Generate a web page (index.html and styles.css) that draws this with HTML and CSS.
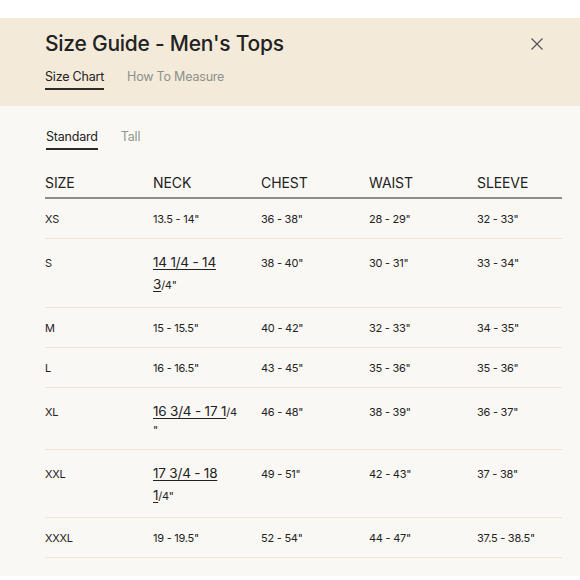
FILE: index.html
```html
<!DOCTYPE html>
<html>
<head>
<meta charset="utf-8">
<link rel="stylesheet" href="styles.css">
</head>
<body>
<div class="modal">
  <header class="head">
    <div class="title-row">
      <h1 class="title">Size Guide - Men's Tops</h1>
      <button class="close" aria-label="Close">
        <svg width="12" height="12" viewBox="0 0 12 12"><path d="M0.5 0.5 L11.5 11.5 M11.5 0.5 L0.5 11.5" stroke="#555" stroke-width="1.2" fill="none"/></svg>
      </button>
    </div>
    <nav class="tabs">
      <span class="tab active">Size Chart</span>
      <span class="tab">How To Measure</span>
    </nav>
  </header>
  <section class="content">
    <nav class="subtabs">
      <span class="subtab active">Standard</span>
      <span class="subtab">Tall</span>
    </nav>
    <div class="table">
      <div class="row hrow">
        <div class="cell">SIZE</div><div class="cell">NECK</div><div class="cell">CHEST</div><div class="cell">WAIST</div><div class="cell">SLEEVE</div>
      </div>
      <div class="row">
        <div class="cell">XS</div><div class="cell">13.5 - 14"</div><div class="cell">36 - 38"</div><div class="cell">28 - 29"</div><div class="cell">32 - 33"</div>
      </div>
      <div class="row tall">
        <div class="cell">S</div><div class="cell"><u class="big">14 1/4 - 14<br>3</u>/4"</div><div class="cell">38 - 40"</div><div class="cell">30 - 31"</div><div class="cell">33 - 34"</div>
      </div>
      <div class="row">
        <div class="cell">M</div><div class="cell">15 - 15.5"</div><div class="cell">40 - 42"</div><div class="cell">32 - 33"</div><div class="cell">34 - 35"</div>
      </div>
      <div class="row">
        <div class="cell">L</div><div class="cell">16 - 16.5"</div><div class="cell">43 - 45"</div><div class="cell">35 - 36"</div><div class="cell">35 - 36"</div>
      </div>
      <div class="row">
        <div class="cell">XL</div><div class="cell"><u class="big">16 3/4 - 17 1</u>/4<br>"</div><div class="cell">46 - 48"</div><div class="cell">38 - 39"</div><div class="cell">36 - 37"</div>
      </div>
      <div class="row">
        <div class="cell">XXL</div><div class="cell"><u class="big">17 3/4 - 18<br>1</u>/4"</div><div class="cell">49 - 51"</div><div class="cell">42 - 43"</div><div class="cell">37 - 38"</div>
      </div>
      <div class="row">
        <div class="cell">XXXL</div><div class="cell">19 - 19.5"</div><div class="cell">52 - 54"</div><div class="cell">44 - 47"</div><div class="cell">37.5 - 38.5"</div>
      </div>
    </div>
  </section>
</div>
</body>
</html>
```

FILE: styles.css
```css
html, body {
  margin: 0;
  padding: 0;
  background: #ffffff;
}
body {
  font-family: Inter, "Liberation Sans", sans-serif;
  color: #222222;
  padding-top: 18px;
}
.modal {
  display: flex;
  flex-direction: column;
}
.head {
  background: #f3eada;
  padding: 12px 37px 16px 45px;
}
.title-row {
  display: flex;
  justify-content: space-between;
  align-items: center;
}
.title {
  margin: 0;
  font-size: 21px;
  line-height: 28px;
  font-weight: 500;
  color: #222;
  letter-spacing: -0.25px;
}
.close {
  background: none;
  border: 0;
  padding: 0;
  width: 12px;
  height: 12px;
  display: flex;
}
.tabs {
  display: flex;
  gap: 23px;
  margin-top: 10px;
}
.tab {
  font-size: 12.5px;
  line-height: 18px;
  color: #8c918b;
  letter-spacing: -0.2px;
  padding-bottom: 2px;
  border-bottom: 2px solid transparent;
}
.tab.active {
  color: #222;
  border-bottom-color: #2a2a2a;
}
.content {
  background: #faf8f4;
  padding: 22px 18px 18px 45px;
}
.subtabs {
  display: flex;
  gap: 23px;
  margin-left: 1px;
}
.subtab {
  font-size: 12.5px;
  line-height: 18px;
  color: #8c988c;
  letter-spacing: -0.2px;
  padding-bottom: 2px;
  border-bottom: 2px solid transparent;
}
.subtab.active {
  color: #222;
  border-bottom-color: #2a2a2a;
}
.table {
  margin-top: 23px;
  display: flex;
  flex-direction: column;
}
.row {
  display: grid;
  grid-template-columns: 108px 108px 108px 108px 1fr;
  align-items: baseline;
  border-bottom: 1px solid #ece4d6;
}
.row.tall .cell {
  padding-bottom: 12px;
}
.cell {
  padding: 12px 4px 11px 0;
  font-size: 11px;
  line-height: 16px;
  letter-spacing: -0.25px;
}
.hrow {
  border-bottom: 2px solid #8c8c8a;
}
.hrow .cell {
  font-size: 14px;
  line-height: 20px;
  letter-spacing: -0.1px;
  padding: 0 0 4px 0;
}
.big {
  font-size: 13.5px;
  line-height: 22px;
  letter-spacing: -0.2px;
  text-underline-offset: 2px;
}
```
